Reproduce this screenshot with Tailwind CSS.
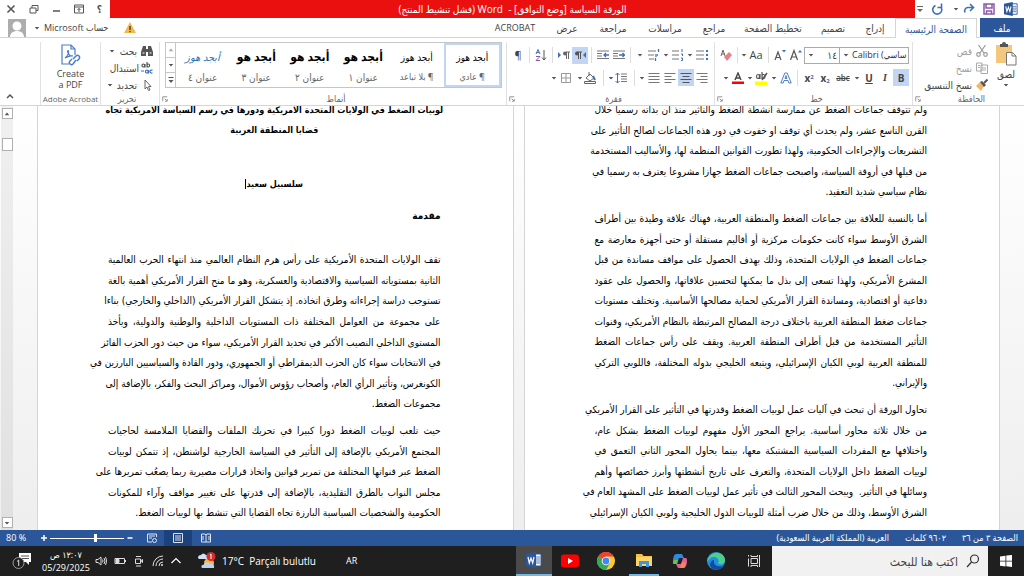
<!DOCTYPE html>
<html lang="ar" dir="rtl">
<head>
  <meta charset="UTF-8" />
  <title>الورقة السياسة [وضع التوافق] - Word</title>
  <script src="https://cdn.jsdelivr.net/npm/@tailwindcss/browser@4"></script>
</head>
<body class="h-screen flex flex-col overflow-hidden bg-white text-[#444] text-[10px] leading-3 font-['Open_Sans','DejaVu_Sans_Condensed','DejaVu_Sans',sans-serif]">

  <!-- Shared icons -->
  <svg class="hidden">
    <symbol id="caret" viewBox="0 0 8 8"><path d="M1 2.500h6L4 6z" fill="#555" /></symbol>
    <symbol id="launcher" viewBox="0 0 8 8"><path d="M1 7V1h6M3.500 3.500l3 3M7 4v3H4" fill="none" stroke="#777" /></symbol>
    <symbol id="word" viewBox="0 0 16 16">
      <path d="M8 2h7v12H8z" fill="#fff" stroke="#2b579a" />
      <path d="M9 5h5M9 7h5M9 9h5M9 11h5" stroke="#2b579a" stroke-width=".8" />
      <path d="M0 2l10-2v16L0 14z" fill="#2b579a" />
      <path d="M2 5l1.300 6L5 6l1.700 5L8 5" fill="none" stroke="#fff" stroke-width="1.200" />
    </symbol>
  </svg>

  <!-- Title bar -->
  <header class="flex h-[18px] shrink-0">
    <div class="w-[109px] flex items-center justify-between ps-1.5 pe-0.5">
      <svg class="size-3.5" viewBox="0 0 16 16"><use href="#word" /></svg>
      <button aria-label="حفظ"><svg class="size-3" viewBox="0 0 12 12" fill="none" stroke="#8a5aa8" stroke-width="1.500"><path d="M1 1h10v10H1zM3 1v4h6V1M3.500 11V8h5v3" /></svg></button>
      <button aria-label="إعادة" class="flex items-center" dir="ltr">
        <svg class="size-1.5 me-1" viewBox="0 0 8 8"><use href="#caret" /></svg>
        <svg class="size-3" viewBox="0 0 12 12" fill="none" stroke="#3f6fb5" stroke-width="1.600"><path d="M10 4.500H5a3.500 3.500 0 0 0-3 5M7 1l3.500 3.500L7 8" /></svg>
      </button>
      <button aria-label="تراجع"><svg class="size-3" viewBox="0 0 12 12" fill="none" stroke="#3f6fb5" stroke-width="1.600"><path d="M3.500 2.500a4.500 4.500 0 1 0 5 1M9.500.500v4H5.500" /></svg></button>
      <button aria-label="تخصيص"><svg class="w-1.5 h-2" viewBox="0 0 6 8"><path d="M0 1.500h6" stroke="#666" /><path d="M0 4h6L3 7z" fill="#666" /></svg></button>
    </div>
    <h1 class="flex-1 bg-[#ea1010] text-white flex items-center justify-center">الورقة السياسة [وضع التوافق] -&nbsp; Word (فشل تنشيط المنتج)</h1>
    <div dir="ltr" class="w-[110px] flex items-center justify-between ps-1.5 pe-2 text-[#555]">
      <button aria-label="إغلاق"><svg class="size-2.5" viewBox="0 0 10 10" stroke="#555" stroke-width="1.600"><path d="M1.500 1.500l7 7M8.500 1.500l-7 7" /></svg></button>
      <button aria-label="استعادة"><svg class="size-2.5" viewBox="0 0 10 10" fill="none" stroke="#555"><path d="M1 4h6v5H1zM3 4V1.500h6V6.500H7" /></svg></button>
      <button aria-label="تصغير"><svg class="size-2.5" viewBox="0 0 10 10" stroke="#555" stroke-width="1.500"><path d="M2 7h7" /></svg></button>
      <button aria-label="خيارات الشريط"><svg class="size-2.5" viewBox="0 0 10 10" fill="none" stroke="#555"><path d="M.5 1h9v8h-9zM.5 3h9M5 8V4.500M3.500 6L5 4.500 6.500 6" /></svg></button>
      <button class="font-bold">؟</button>
    </div>
  </header>

  <!-- Tabs -->
  <nav class="flex h-5 shrink-0 border-b border-[#d5d5d5]">
    <button class="w-11 bg-[#2b579a] text-white">ملف</button>
    <button class="w-[82px] ms-[3px] h-5 border border-b-0 border-[#d5d5d5] bg-white text-[#2b579a]">الصفحة الرئيسية</button>
    <button class="w-10">إدراج</button>
    <button class="w-11">تصميم</button>
    <button class="w-19">تخطيط الصفحة</button>
    <button class="w-[42px]">مراجع</button>
    <button class="w-14">مراسلات</button>
    <button class="w-12">مراجعة</button>
    <button class="w-11">عرض</button>
    <button class="w-15 text-[9px]">ACROBAT</button>
    <div class="ms-auto pe-2 flex items-center gap-1">
      <svg class="size-3" viewBox="0 0 12 12"><path d="M6 0l6 11H0z" fill="#f3b94d" /><path d="M6 4v4M6 9v1.300" stroke="#333" stroke-width="1.300" /></svg>
      <button class="flex items-center text-[9px]"><span class="ps-3 pe-1">حساب Microsoft</span><svg class="size-1.5 me-1" viewBox="0 0 8 8"><use href="#caret" /></svg></button>
      <svg class="size-[18px]" viewBox="0 0 18 18"><path d="M0 0h18v18H0z" fill="#adadad" /><circle cx="9" cy="7" r="4.500" fill="#fff" /><path d="M2 18c0-8 14-8 14 0z" fill="#fff" /></svg>
    </div>
  </nav>

  <!-- Ribbon -->
  <section class="flex h-[68px] shrink-0 border-b border-[#d5d5d5] pt-1">
    <!-- Clipboard -->
    <div class="w-28 border-e border-[#e1e1e1] flex flex-col">
      <div class="flex flex-1 ps-1.5">
        <button class="w-6 me-1.5 flex flex-col items-center">
          <svg class="w-[22px] h-6 shrink-0" viewBox="0 0 22 24"><path d="M1 3h16v18H1z" fill="#f3c77c" /><path d="M5 5V2h2a2 2 0 0 1 4 0h2v3z" fill="#555" /><path d="M11.500 10.500h6l3.500 3.500v9h-9.500z" fill="#fff" stroke="#777" /><path d="M17 10.500V14h4" fill="none" stroke="#777" /></svg>
          <span class="mt-0.5">لصق</span>
          <svg class="size-1.5 shrink-0 mt-0.5" viewBox="0 0 8 8"><use href="#caret" /></svg>
        </button>
        <div class="flex flex-col">
          <button class="flex items-center gap-1 h-[17px] text-[#a0a0a0]"><svg class="size-3" viewBox="0 0 12 12" fill="none" stroke="#999" stroke-width="1.200"><path d="M2.500 0L8 8M9.500 0L4 8" /><circle cx="2.500" cy="9.500" r="1.800" /><circle cx="9.500" cy="9.500" r="1.800" /></svg>قص</button>
          <button class="flex items-center gap-1 h-[17px] text-[#a0a0a0]"><svg class="size-3" viewBox="0 0 12 12" fill="#fff" stroke="#aaa"><path d="M.5 1h5.500v8H.5zM5 3h6.500v8.500H5zM6.500 6H10M6.500 8H10M2 3.500h2M2 5.500h2" /></svg>نسخ</button>
          <button class="flex items-center gap-1 h-[17px]"><svg class="size-3" viewBox="0 0 12 12"><path d="M0 7l4-4 4 4-3 5z" fill="#f0b763" /><path d="M4 3l2-1 4 4-2 2z" fill="#555" /><path d="M8 4l3.500-3.500" stroke="#555" stroke-width="2" /></svg>نسخ التنسيق</button>
        </div>
      </div>
      <div class="flex items-center h-3 px-0.5"><span class="flex-1 text-center text-[9px] text-[#666]">الحافظة</span><svg class="size-1.5" viewBox="0 0 8 8"><use href="#launcher" /></svg></div>
    </div>

    <!-- Font -->
    <div class="w-[198px] border-e border-[#e1e1e1] flex flex-col">
      <div class="flex-1 flex flex-col gap-[5px] ps-[3px] pt-1">
        <div dir="ltr" class="flex items-center justify-end h-[18px]">
          <button aria-label="مسح التنسيق" class="w-4"><svg class="size-3 mx-auto" viewBox="0 0 12 12"><path d="M1 7l2-6 2 6M2 5h2.500" fill="none" stroke="#666" /><path d="M4 8l5-5 3 3-5 6z" fill="#e88088" /></svg></button>
          <i class="w-px h-4 mx-[3px] bg-[#ddd]"></i>
          <button class="flex items-center text-[11px]"><svg class="size-1.5" viewBox="0 0 8 8"><use href="#caret" /></svg><span class="w-[18px] text-center">Aa</span></button>
          <i class="w-px h-4 mx-[3px] bg-[#ddd]"></i>
          <button aria-label="تصغير الخط" class="w-4"><svg class="size-3 mx-auto" viewBox="0 0 12 12"><path d="M1 11l3-8 3 8M2 8.500h4" fill="none" stroke="#555" stroke-width="1.200" /><path d="M8 1h4l-2 2.500z" fill="#3f6fb5" /></svg></button>
          <button aria-label="تكبير الخط" class="w-4"><svg class="size-3 mx-auto" viewBox="0 0 12 12"><path d="M.5 11L4 1.500 7.500 11M2 8h4" fill="none" stroke="#555" stroke-width="1.200" /><path d="M8 3.500h4L10 1z" fill="#3f6fb5" /></svg></button>
          <div class="w-9 h-[17px] border border-[#ababab] flex items-center">
            <svg class="size-1.5 shrink-0 mx-[3px]" viewBox="0 0 8 8"><use href="#caret" /></svg>
            <input type="text" aria-label="حجم الخط" value="١٤" class="w-full min-w-0 text-right pr-0.5" />
          </div>
          <div class="w-[69px] h-[17px] border border-s-0 border-[#ababab] flex items-center">
            <svg class="size-1.5 shrink-0 mx-[3px]" viewBox="0 0 8 8"><use href="#caret" /></svg>
            <input type="text" aria-label="الخط" value="Calibri (ساسي" class="w-full min-w-0 text-[9px] text-[#333]" />
          </div>
        </div>
        <div dir="ltr" class="flex items-center justify-end h-[17px]">
          <svg class="w-2 h-1.5" viewBox="0 0 8 8"><use href="#caret" /></svg>
          <button aria-label="لون الخط" class="w-4"><svg class="size-3 mx-auto" viewBox="0 0 12 12"><path d="M3 8l3-7 3 7M4 6h4" fill="none" stroke="#444" stroke-width="1.400" /><path d="M0 9.500h12V12H0z" fill="#f00" /></svg></button>
          <svg class="w-2 h-1.5" viewBox="0 0 8 8"><use href="#caret" /></svg>
          <button aria-label="تمييز" class="w-4"><svg class="size-3.5 mx-auto" viewBox="0 0 14 14"><path d="M1.500 5.500a1.500 2 0 1 0 3 0 1.500 2 0 1 0-3 0M5 3v5M7 1v7M7 5.500a1.500 2 0 1 0 3 0 1.500 2 0 1 0-3 0" fill="none" stroke="#555" stroke-width="1.200" /><path d="M7 9l5-7" stroke="#555" stroke-width="1.500" /><path d="M0 10.500h12V14H0z" fill="#ff0" /></svg></button>
          <svg class="w-2 h-1.5" viewBox="0 0 8 8"><use href="#caret" /></svg>
          <button aria-label="تأثيرات النص" class="w-4"><svg class="size-3 mx-auto" viewBox="0 0 12 12" fill="none" stroke="#4f81c7"><path d="M.8 11L4.800 1h2.400l4 10H8.800l-.8-2.500H4L3.200 11zM5 6.500h2L6 3.500z" /></svg></button>
          <i class="w-px h-4 mx-[3px] bg-[#ddd]"></i>
          <button class="w-4 font-bold">x<sup class="text-[6px] text-[#3f6fb5]">2</sup></button>
          <button class="w-4 font-bold">x<sub class="text-[6px] text-[#3f6fb5]">2</sub></button>
          <button class="w-5 font-semibold text-[8px] line-through">abc</button>
          <svg class="w-2 h-1.5" viewBox="0 0 8 8"><use href="#caret" /></svg>
          <button class="w-4 font-bold underline">U</button>
          <button class="w-4 font-['Liberation_Serif',serif] font-bold italic">I</button>
          <button class="w-4 h-[17px] font-bold bg-[#c2d5f2]">B</button>
        </div>
      </div>
      <div class="flex items-center h-3 px-0.5"><span class="flex-1 text-center text-[9px] text-[#666]">خط</span><svg class="size-1.5" viewBox="0 0 8 8"><use href="#launcher" /></svg></div>
    </div>

    <!-- Paragraph -->
    <div class="w-[208px] border-e border-[#e1e1e1] flex flex-col">
      <div class="flex-1 flex flex-col gap-[5px] ps-1 pt-1">
        <div dir="ltr" class="flex items-center justify-end h-[18px]">
          <button class="w-4 text-[11px]">¶</button>
          <i class="w-px h-4 mx-[3px] bg-[#ddd]"></i>
          <button aria-label="فرز" class="w-4"><svg class="size-3 mx-auto" viewBox="0 0 12 12" fill="none"><path d="M1 5l2-4.500L5 5M2 3.500h2" stroke="#3f6fb5" /><path d="M1 7.500h4l-4 4h4" stroke="#8a5aa8" /><path d="M9 1v10M7 8.500L9 11l2-2.500" stroke="#555" /></svg></button>
          <i class="w-px h-4 mx-[3px] bg-[#ddd]"></i>
          <button aria-label="من اليسار إلى اليمين" class="w-4"><svg class="size-3 mx-auto" viewBox="0 0 12 12"><path d="M0 3l3 3-3 3z" fill="#3f6fb5" /><path d="M8 3h4M8.500 3v7M10.500 3v7" stroke="#666" /><circle cx="7" cy="4.500" r="2" fill="#666" /></svg></button>
          <button aria-label="من اليمين إلى اليسار" class="w-4 h-[17px] bg-[#c2d5f2]"><svg class="size-3 mx-auto" viewBox="0 0 12 12"><path d="M12 3L9 6l3 3z" fill="#3f6fb5" /><path d="M3 3h5M4.500 3v7M6.500 3v7" stroke="#555" /><circle cx="3" cy="4.500" r="2" fill="#555" /></svg></button>
          <i class="w-px h-4 mx-[3px] bg-[#ddd]"></i>
          <button aria-label="زيادة المسافة" class="w-4"><svg class="size-3 mx-auto" viewBox="0 0 12 12" fill="none" stroke="#777"><path d="M0 2h12M0 4.500h5M0 7h5M0 9.500h12" /><path d="M12 6H7M9 4L7 6l2 2" stroke="#3f6fb5" stroke-width="1.300" /></svg></button>
          <button aria-label="إنقاص المسافة" class="w-4"><svg class="size-3 mx-auto" viewBox="0 0 12 12" fill="none" stroke="#777"><path d="M0 2h12M0 4.500h5M0 7h5M0 9.500h12" /><path d="M6 6h5.500M9.500 4l2 2-2 2" stroke="#3f6fb5" stroke-width="1.300" /></svg></button>
          <i class="w-px h-4 mx-[3px] bg-[#ddd]"></i>
          <svg class="w-3 h-1.5" viewBox="0 0 8 8"><use href="#caret" /></svg>
          <button aria-label="قائمة متعددة" class="w-4"><svg class="size-3 mx-auto" viewBox="0 0 12 12" fill="none" stroke="#777"><path d="M0 2h8M0 6h6M1 10h5" /><path d="M10.500 0v3M8 5v3M9 6h1M7.500 9v3" stroke="#3f6fb5" stroke-width="1.300" /></svg></button>
          <svg class="w-2 h-1.5" viewBox="0 0 8 8"><use href="#caret" /></svg>
          <button aria-label="ترقيم" class="w-4"><svg class="size-3 mx-auto" viewBox="0 0 12 12" fill="none" stroke="#777"><path d="M0 2h7M0 6h7M0 10h7" /><path d="M10 0v3M9 5h1.500v2M9 9h1.500v2.500H9" stroke="#3f6fb5" /></svg></button>
          <svg class="w-2 h-1.5" viewBox="0 0 8 8"><use href="#caret" /></svg>
          <button aria-label="تعداد نقطي" class="w-4"><svg class="size-3 mx-auto" viewBox="0 0 12 12" fill="none" stroke="#777"><path d="M0 2h8M0 6h8M0 10h8" /><path d="M10 2h2M10 6h2M10 10h2" stroke="#3f6fb5" stroke-width="2" /></svg></button>
        </div>
        <div dir="ltr" class="flex items-center justify-end h-[17px]">
          <svg class="w-3 h-1.5" viewBox="0 0 8 8"><use href="#caret" /></svg>
          <button aria-label="حدود" class="w-4"><svg class="size-3" viewBox="0 0 12 12" fill="none" stroke="#999"><path d="M1.500 1.500h9v9h-9zM6 1.500v9M1.500 6h9" /></svg></button>
          <svg class="w-2 h-1.5" viewBox="0 0 8 8"><use href="#caret" /></svg>
          <button aria-label="تظليل" class="w-4"><svg class="size-3" viewBox="0 0 12 12" fill="none" stroke="#666"><path d="M2 6l4-4 4 4-4 3zM5 0v4" /><path d="M9 4l2 4" stroke="#3f6fb5" stroke-width="2" /><path d="M.5 9.500h11v2H.5z" /></svg></button>
          <i class="w-px h-4 mx-[3px] bg-[#ddd]"></i>
          <svg class="w-2 h-1.5" viewBox="0 0 8 8"><use href="#caret" /></svg>
          <button aria-label="تباعد الأسطر" class="w-4"><svg class="size-3" viewBox="0 0 12 12" fill="none" stroke="#777"><path d="M6 2h6M6 4.500h6M6 7h6M6 9.500h6" /><path d="M2.500 1v10M.5 3l2-2 2 2M.5 9l2 2 2-2" stroke="#3f6fb5" /></svg></button>
          <i class="w-px h-4 mx-[3px] bg-[#ddd]"></i>
          <svg class="w-2 h-1.5" viewBox="0 0 8 8"><use href="#caret" /></svg>
          <button aria-label="ضبط" class="w-4"><svg class="size-3 mx-auto" viewBox="0 0 12 12" stroke="#777"><path d="M.5 1.500h11M.5 4.500h11M.5 7.500h11M.5 10.500h11" /></svg></button>
          <button aria-label="محاذاة لليسار" class="w-4"><svg class="size-3 mx-auto" viewBox="0 0 12 12" stroke="#777"><path d="M.5 1.500h11M.5 4.500h7M.5 7.500h11M.5 10.500h7" /></svg></button>
          <button aria-label="توسيط" class="w-4 h-[17px] bg-[#c2d5f2]"><svg class="size-3 mx-auto" viewBox="0 0 12 12" stroke="#555"><path d="M.5 1.500h11M2.500 4.500h7M.5 7.500h11M2.500 10.500h7" /></svg></button>
          <button aria-label="محاذاة لليمين" class="w-4"><svg class="size-3 mx-auto" viewBox="0 0 12 12" stroke="#777"><path d="M.5 1.500h11M4.500 4.500h7M.5 7.500h11M4.500 10.500h7" /></svg></button>
        </div>
      </div>
      <div class="flex items-center h-3 px-0.5"><span class="flex-1 text-center text-[9px] text-[#666]">فقرة</span><svg class="size-1.5" viewBox="0 0 8 8"><use href="#launcher" /></svg></div>
    </div>

    <!-- Styles -->
    <div class="flex-1 min-w-0 border-e border-[#e1e1e1] flex flex-col">
      <div class="h-[46px] ms-1 me-[5px] border border-[#c6c6c6] flex text-black">
        <button class="flex-1 border-2 border-[#c2d5f2] flex flex-col items-center pt-1.5 whitespace-nowrap overflow-hidden">أبجد هوز<span class="mt-auto mb-0.5 text-[9px] text-[#666]">¶ عادي</span></button>
        <button class="flex-1 flex flex-col items-center pt-2 whitespace-nowrap overflow-hidden">أبجد هوز<span class="mt-auto mb-1 text-[9px] text-[#666]">¶ بلا تباعد</span></button>
        <button class="flex-1 flex flex-col items-center pt-2 text-[12px] font-bold whitespace-nowrap overflow-hidden">أبجد هو<span class="mt-auto mb-1 text-[10px] font-normal text-[#666]">عنوان ١</span></button>
        <button class="flex-1 flex flex-col items-center pt-2 text-[12px] font-bold whitespace-nowrap overflow-hidden">أبجد هو<span class="mt-auto mb-1 text-[10px] font-normal text-[#666]">عنوان ٢</span></button>
        <button class="flex-1 flex flex-col items-center pt-2 text-[12px] font-bold whitespace-nowrap overflow-hidden">أبجد هو<span class="mt-auto mb-1 text-[10px] font-normal text-[#666]">عنوان ٣</span></button>
        <button class="flex-1 flex flex-col items-center pt-2 italic text-[#2e74b5] whitespace-nowrap overflow-hidden">أبجد هوز<span class="mt-auto mb-1 text-[10px] not-italic text-[#666]">عنوان ٤</span></button>
        <div class="w-2.5 border-s border-[#c6c6c6] flex flex-col divide-y divide-[#c6c6c6]">
          <button aria-label="أعلى" class="flex-1"><svg class="size-1.5 mx-auto rotate-180 opacity-50" viewBox="0 0 8 8"><use href="#caret" /></svg></button>
          <button aria-label="أسفل" class="flex-1"><svg class="size-1.5 mx-auto" viewBox="0 0 8 8"><use href="#caret" /></svg></button>
          <button aria-label="المزيد" class="flex-1"><svg class="size-2 mx-auto" viewBox="0 0 8 8"><path d="M1.500 1.500h5" stroke="#555" /><path d="M1.500 4h5L4 7z" fill="#555" /></svg></button>
        </div>
      </div>
      <div class="flex items-center h-3 mt-auto px-0.5"><span class="flex-1 text-center text-[9px] text-[#666]">أنماط</span><svg class="size-1.5" viewBox="0 0 8 8"><use href="#launcher" /></svg></div>
    </div>

    <!-- Editing -->
    <div class="w-[59px] border-e border-[#e1e1e1] flex flex-col ps-1.5">
      <button class="flex items-center gap-1 h-[17px]"><svg class="size-3 shrink-0" viewBox="0 0 12 12" fill="#555"><path d="M2 1h3v3h2V1h3l2 6v4H7V7H5v4H0V7z" /><path d="M1.500 8h2M8.500 8h2" stroke="#fff" /></svg>بحث<svg class="size-1.5 ms-auto me-2" viewBox="0 0 8 8"><use href="#caret" /></svg></button>
      <button class="flex items-center gap-0.5 h-[17px] whitespace-nowrap"><svg class="size-3 shrink-0" viewBox="0 0 12 12" fill="none" stroke-width="1.200"><path d="M1 3.500a1.300 1.500 0 1 0 2.600 0 1.300 1.500 0 1 0-2.600 0M4 2v3.500M6 0v5.500M6 3.500a1.300 1.500 0 1 0 2.600 0 1.300 1.500 0 1 0-2.600 0" stroke="#555" /><path d="M4.500 9.500a1.300 1.500 0 1 0 2.600 0 1.300 1.500 0 1 0-2.600 0M7.500 8v3.500M11.500 8.200q-2.500-.5-2.500 1.300t2.500 1.500M0 9h3" stroke="#3f6fb5" /></svg>استبدال</button>
      <button class="flex items-center gap-1 h-[17px]"><svg class="size-3 shrink-0" viewBox="0 0 12 12" fill="#fff" stroke="#666"><path d="M4 1v9l2-2 1.500 3.500L9 11 7.500 7.500H10z" /></svg>تحديد<svg class="size-1.5 shrink-0 ms-auto me-1.5" viewBox="0 0 8 8"><use href="#caret" /></svg></button>
      <span class="mt-auto text-center text-[9px] text-[#666]">تحرير</span>
    </div>

    <!-- Acrobat -->
    <div class="w-15 border-e border-[#e1e1e1] flex flex-col items-center">
      <button class="flex flex-col items-center text-[9px] leading-[11px] pt-0.5">
        <svg class="w-5 h-[22px]" viewBox="0 0 20 22" fill="none" stroke="#4a80c9" stroke-width="1.200"><path d="M8 20H1V1h9l4 4v6M10 1v4h4" /><path d="M4 14c3-2 4-6 3.500-7S6 7 7 9s2 3 4 3-2-1-7 2" /><path d="M12 15l3-3a2 2 0 0 1 3 3l-2 2M15 16l-3 4a2 2 0 0 1-3-3l2-2" stroke-width="1.500" /></svg>
        <span class="mt-0.5">Create</span><span>a PDF</span>
      </button>
      <span class="mt-auto text-[8px] text-[#666] whitespace-nowrap">Adobe Acrobat</span>
    </div>
    <div class="w-10 flex items-end justify-end p-1.5">
      <button aria-label="طي الشريط"><svg class="w-2 h-1.5" viewBox="0 0 8 6"><path d="M1 5l3-3 3 3" fill="none" stroke="#555" stroke-width="1.500" /></svg></button>
    </div>
  </section>

  <!-- Document -->
  <main class="flex-1 min-h-0 flex overflow-hidden bg-linear-to-b from-white to-[#eee] text-black text-[10px] leading-[20px] font-['DejaVu_Sans_Condensed','DejaVu_Sans',sans-serif]">
    <article class="flex-1 min-w-0 ms-6 bg-white border-x border-[#d5d5d5] ps-[72px] pe-[70px] overflow-hidden">
      <p class="-mt-[6px] h-[103px] grid grid-cols-[100%] auto-rows-fr whitespace-nowrap [text-align-last:justify]">
        <span>ولم تتوقف جماعات الضغط عن ممارسة انشطة الضغط والتأثير منذ ان بدأته رسميا خلال</span>
        <span>القرن التاسع عشر، ولم يحدث أي توقف او خفوت في دور هذه الجماعات لصالح التأثير على</span>
        <span>التشريعات والإجراءات الحكومية، ولهذا تطورت القوانين المنظمة لها، والأساليب المستخدمة</span>
        <span>من قبلها في أروقة السياسة، واصبحت جماعات الضغط جهازا مشروعا يعترف به رسميا في</span>
        <span class="[text-align-last:start]">نظام سياسي شديد التعقيد.</span>
      </p>
      <p class="mt-1.5 h-[185px] grid grid-cols-[100%] auto-rows-fr whitespace-nowrap [text-align-last:justify]">
        <span>أما بالنسبة للعلاقة بين جماعات الضغط والمنطقة العربية، فهناك علاقة وطيدة بين أطراف</span>
        <span>الشرق الأوسط سواء كانت حكومات مركزية أو أقاليم مستقلة أو حتى أجهزة معارضة مع</span>
        <span>جماعات الضغط في الولايات المتحدة، وذلك بهدف الحصول على مواقف مساندة من قبل</span>
        <span>المشرع الأمريكي، ولهذا تسعى إلى بذل ما يمكنها لتحسين علاقاتها، والحصول على عقود</span>
        <span>دفاعية أو اقتصادية، ومساندة القرار الأمريكي لحماية مصالحها الأساسية. وتختلف مستويات</span>
        <span>جماعات ضغط المنطقة العربية باختلاف درجة المصالح المرتبطة بالنظام الأمريكي، وقنوات</span>
        <span>التأثير المستخدمة من قبل أطراف المنطقة العربية. ويقف على رأس جماعات الضغط</span>
        <span>للمنطقة العربية لوبي الكيان الإسرائيلي، ويتبعه الخليجي بدوله المختلفة، فاللوبي التركي</span>
        <span class="[text-align-last:start]">والإيراني.</span>
      </p>
      <p class="mt-1.5 h-[123px] grid grid-cols-[100%] auto-rows-fr whitespace-nowrap [text-align-last:justify]">
        <span>تحاول الورقة أن تبحث في آليات عمل لوبيات الضغط وقدرتها في التأثير على القرار الأمريكي</span>
        <span>من خلال ثلاثة محاور أساسية. يراجع المحور الأول مفهوم لوبيات الضغط بشكل عام،</span>
        <span>واختلافها مع المفردات السياسية المشتبكة معها، بينما يحاول المحور الثاني التعمق في</span>
        <span>لوبيات الضغط داخل الولايات المتحدة، والتعرف على تاريخ أنشطتها وأبرز خصائصها وأهم</span>
        <span>وسائلها في التأثير.&nbsp; ويبحث المحور الثالث في تأثير عمل لوبيات الضغط على المشهد العام في</span>
        <span>الشرق الأوسط، وذلك من خلال ضرب أمثلة للوبيات الدول الخليجية ولوبي الكيان الإسرائيلي</span>
      </p>
    </article>
    <article class="flex-1 min-w-0 ms-2.5 bg-white border-x border-[#d5d5d5] ps-[72px] pe-[70px] overflow-hidden">
      <h2 class="-mt-1.5 text-center text-[9px] font-bold whitespace-nowrap flex flex-col items-center">
        <span>لوبيات الضغط في الولايات المتحدة الامريكية ودورها في رسم السياسة الامريكية تجاه</span>
        <span>قضايا المنطقة العربية</span>
      </h2>
      <p class="mt-[34px] text-center text-[9px] font-bold"><span class="border-e border-black">سلسبيل سعيد</span></p>
      <h3 class="mt-3 font-bold">مقدمة</h3>
      <p class="mt-6 h-[165px] grid grid-cols-[100%] auto-rows-fr whitespace-nowrap [text-align-last:justify]">
        <span>تقف الولايات المتحدة الأمريكية على رأس هرم النظام العالمي منذ انتهاء الحرب العالمية</span>
        <span>الثانية بمستوياته السياسية والاقتصادية والعسكرية، وهو ما منح القرار الأمريكي أهمية بالغة</span>
        <span>تستوجب دراسة إجراءاته وطرق اتخاذه. إذ يتشكل القرار الأمريكي (الداخلي والخارجي) بناءا</span>
        <span>على مجموعة من العوامل المختلفة ذات المستويات الداخلية والوطنية والدولية، ويأخذ</span>
        <span>المستوى الداخلي النصيب الأكبر في تحديد القرار الأمريكي، سواء من حيث دور الحزب الفائز</span>
        <span>في الانتخابات سواء كان الحزب الديمقراطي أو الجمهوري، ودور القادة والسياسيين البارزين في</span>
        <span>الكونغرس، وتأثير الرأي العام، وأصحاب رؤوس الأموال، ومراكز البحث والفكر، بالإضافة إلى</span>
        <span class="[text-align-last:start]">مجموعات الضغط.</span>
      </p>
      <p class="mt-1.5 h-[103px] grid grid-cols-[100%] auto-rows-fr whitespace-nowrap [text-align-last:justify]">
        <span>حيث تلعب لوبيات الضغط دورا كبيرا في تحريك الملفات والقضايا الملامسة لحاجيات</span>
        <span>المجتمع الأمريكي بالإضافة إلى التأثير في السياسة الخارجية لواشنطن، إذ تتمكن لوبيات</span>
        <span>الضغط عبر قنواتها المختلفة من تمرير قوانين واتخاذ قرارات مصيرية ربما يصعُب تمريرها على</span>
        <span>مجلس النواب بالطرق التقليدية، بالإضافة إلى قدرتها على تغيير مواقف وآراء للمكونات</span>
        <span class="[text-align-last:start]">الحكومية والشخصيات السياسية البارزة تجاه القضايا التي تنشط بها لوبيات الضغط.</span>
      </p>
    </article>
    <div class="w-6"></div>
    <!-- Scrollbar -->
    <div class="w-3 me-px flex flex-col items-center bg-linear-to-b from-[#f0f0f0] to-[#e0e0e0] py-0.5">
      <button aria-label="تمرير لأعلى" class="size-[11px] border border-[#b0b0b0] bg-white"><svg class="size-1.5 mx-auto rotate-180" viewBox="0 0 8 8"><use href="#caret" /></svg></button>
      <div class="mt-[19px] w-[11px] h-[13px] border border-[#b0b0b0] bg-white"></div>
      <button aria-label="تمرير لأسفل" class="mt-auto size-[11px] border border-[#b0b0b0] bg-white"><svg class="size-1.5 mx-auto" viewBox="0 0 8 8"><use href="#caret" /></svg></button>
    </div>
  </main>

  <!-- Status bar -->
  <footer class="h-4 shrink-0 bg-[#2b579a] text-white text-[9px] flex items-center ps-1.5">
    <span>الصفحة ٣ من ٣٦</span>
    <span class="ms-4">٩٦٠٢ كلمات</span>
    <span class="ms-4">العربية (المملكة العربية السعودية)</span>
    <div dir="ltr" class="flex-1 flex items-center self-stretch ps-1.5">
      <span class="w-[34px]">80 %</span>
      <svg class="size-2" viewBox="0 0 8 8" stroke="#fff" stroke-width="1.500"><path d="M4 1v6M1 4h6" /></svg>
      <input type="range" dir="rtl" aria-label="التكبير" min="10" max="200" value="83" class="appearance-none mx-0.5 w-[74px] h-px bg-white [&::-webkit-slider-thumb]:appearance-none [&::-webkit-slider-thumb]:w-[3px] [&::-webkit-slider-thumb]:h-2 [&::-webkit-slider-thumb]:bg-white" />
      <svg class="size-2 me-1.5" viewBox="0 0 8 8" stroke="#fff" stroke-width="1.500"><path d="M1.500 4h5" /></svg>
      <button aria-label="تخطيط ويب" class="w-6"><svg class="size-2.5 mx-auto" viewBox="0 0 10 10" fill="none" stroke="#dbe5f3"><path d="M5 9H.5V1h9v3M2 3h6M2 5h3" /><circle cx="7.500" cy="7.500" r="2" /></svg></button>
      <button aria-label="تخطيط الطباعة" class="w-7 self-stretch bg-[#1c427d]"><svg class="size-2.5 mx-auto" viewBox="0 0 10 10" fill="none" stroke="#dbe5f3"><path d="M.5.500h9v9h-9zM2 3h6M2 5h6M2 7h6" /></svg></button>
      <button aria-label="وضع القراءة" class="w-7"><svg class="size-2.5 mx-auto" viewBox="0 0 10 10" fill="none" stroke="#dbe5f3"><path d="M.5 1h3.500l1 1 1-1h3.500v8H.5zM5 2v7M2 3v4M8 3v4" /></svg></button>
    </div>
  </footer>

  <!-- Taskbar -->
  <div class="h-[30px] shrink-0 bg-[#1f1f1f] text-white flex items-stretch">
    <button aria-label="ابدأ" class="w-9 shrink-0"><svg class="size-3 mx-auto" viewBox="0 0 12 12" fill="#fff"><path d="M0 1.500l5.500-.8v5H0zM6.300.600L12 0v5.700H6.300zM0 6.400h5.500v5L0 10.700zM6.300 6.400H12V12l-5.700-.7z" /></svg></button>
    <label class="w-[216px] shrink-0 bg-[#f1f1f1] flex items-center gap-2 ps-2">
      <svg class="size-3.5 shrink-0" viewBox="0 0 14 14" fill="none" stroke="#333" stroke-width="1.200"><circle cx="8.500" cy="5" r="4" /><path d="M5.500 8L1 13" /></svg>
      <input type="text" aria-label="بحث" placeholder="اكتب هنا للبحث" class="w-full min-w-0 text-[12px] placeholder:text-[#444]" />
    </label>
    <button aria-label="عرض المهام" class="w-9 shrink-0"><svg class="size-3.5 mx-auto" viewBox="0 0 14 14" fill="none" stroke="#ddd"><path d="M4 4.500h6.500v5H4zM4 1v1.500h6.500V1M4 13v-1.500h6.500V13M1.500 1v1.500M1.500 4.500v8M12.500 1v12" /></svg></button>
    <button aria-label="Edge" class="w-10 shrink-0"><svg class="size-[18px] mx-auto" viewBox="0 0 18 18"><circle cx="9" cy="9" r="9" fill="#1f8fe0" /><path d="M2 5C6-2 18 0 18 8c0 5-6 5-7 3 2-3-1-6-4-6S3 6 0 10c0-2 1-4 2-5z" fill="#4ccf8d" /><path d="M7 8c-1 5 3 7 9 6-4 6-12 4-13-1 0-3 2-5 4-5z" fill="#124d9c" /></svg></button>
    <button aria-label="Copilot" class="w-8 shrink-0"><svg class="size-4 mx-auto" viewBox="0 0 16 16"><path d="M4 1h6l2 4H7L5 11H2C0 11 1 1 4 1z" fill="#2a8be0" /><path d="M2 7h4l-1 4H2c-2 0-1-3 0-4z" fill="#6cc04a" /><path d="M12 15H6L4 11h5l2-6h3c2 0 1 10-2 10z" fill="#e0609c" /><path d="M8 15l2-6 4 1-2 5z" fill="#f08a4a" /></svg></button>
    <button aria-label="مستكشف الملفات" class="w-10 shrink-0 px-[5px] flex flex-col items-center"><svg class="size-4 mt-1.5" viewBox="0 0 16 16"><path d="M0 2h6l1.500 2H16v10H0z" fill="#f5c044" /><path d="M0 5h16v9H0z" fill="#fbd66a" /><path d="M3 9h10v6h-3v-3H6v3H3z" fill="#3a97e0" /></svg><i class="mt-auto w-full h-0.5 bg-[#6cb8e8]"></i></button>
    <button aria-label="Chrome" class="w-9 shrink-0"><svg class="size-[18px] mx-auto" viewBox="0 0 18 18"><circle cx="9" cy="9" r="9" fill="#fcc934" /><path d="M9 9L1.200 4.500A9 9 0 0 1 16.800 4.500H9z" fill="#ea4335" /><path d="M1.200 4.500A9 9 0 0 0 9 18l4-7-4-2z" fill="#34a853" /><circle cx="9" cy="9" r="4.300" fill="#fff" /><circle cx="9" cy="9" r="3.400" fill="#4285f4" /></svg></button>
    <button aria-label="YouTube" class="w-9 shrink-0"><svg class="w-[18px] h-3.5 mx-auto" viewBox="0 0 18 14"><rect width="18" height="13" y=".5" rx="3" fill="#f00" /><path d="M7 4l5 3-5 3z" fill="#fff" /></svg></button>
    <button aria-label="Word" class="w-9 shrink-0 bg-[#4a4a4a] flex flex-col items-center"><svg class="size-4 mt-1.5" viewBox="0 0 16 16"><use href="#word" /></svg><i class="mt-auto w-full h-0.5 bg-[#6cb8e8]"></i></button>
    <div dir="ltr" class="flex-1 min-w-0 ps-3 flex items-center">
      <button aria-label="الإشعارات" class="w-[29px] shrink-0"><svg class="w-5 h-[18px]" viewBox="0 0 20 18"><path d="M7 1h12v9h-2v3l-3-3H7z" fill="#fff" /><path d="M9 4h8M9 6.500h8" stroke="#555" /><circle cx="6.500" cy="11" r="5.500" fill="#1f1f1f" stroke="#999" /><path d="M5 9.500L6.700 8v6" fill="none" stroke="#ddd" /></svg></button>
      <div class="w-[50px] text-center text-[9px] leading-[13px]"><div dir="rtl">١٢:٠٧ ص</div><div>05/29/2025</div></div>
      <div class="flex items-center gap-[7px] ms-1">
        <svg class="size-3" viewBox="0 0 12 12" fill="none" stroke="#ddd"><path d="M1 4.500h2L6 2v8L3 7.500H1zM7.500 4.500q1 1.500 0 3M9 3q2 3 0 6M10.500 2q2.500 4 0 8" /></svg>
        <svg class="size-3" viewBox="0 0 12 12" fill="none" stroke="#ddd"><path d="M1 3.500h9.500v5H1zM11.500 5v2" /><path d="M2 4.500h3v3H2z" fill="#ddd" /></svg>
        <svg class="size-3" viewBox="0 0 12 12" fill="none" stroke="#ddd"><path d="M2.500 4h5v4.500h-5zM7.500 6l2-1.500v3zM3 1.500h5M3 11h5" /></svg>
        <svg class="size-3" viewBox="0 0 12 12" fill="none" stroke="#ddd"><path d="M1 11A10 10 0 0 1 11 1M4 11a7 7 0 0 1 7-7M7 11a4 4 0 0 1 4-4" /><circle cx="10" cy="10" r=".7" /></svg>
        <svg class="size-2.5" viewBox="0 0 10 10" fill="none" stroke="#fff" stroke-width="1.200"><path d="M.5 7L5 2.500 9.500 7" /></svg>
      </div>
      <button class="flex items-center ms-4 whitespace-nowrap">
        <svg class="w-[19px] h-[18px] me-1.5" viewBox="0 0 19 18"><circle cx="12" cy="11" r="5" fill="#f6b93b" /><path d="M1 6q0-3 3-3 2-3 5 0 3 0 2 4H2z" fill="#cfe0f7" /><path d="M5 16q-2-3 2-3.500 2-4 6-1 5 0 4 4.500z" fill="#bcd3f2" /><circle cx="14" cy="4.500" r="4.500" fill="#d92b2b" /><path d="M13 3l1-1v5" fill="none" stroke="#fff" /></svg>
        17°C&nbsp; Parçalı bulutlu
      </button>
      <span class="ms-[30px] text-[9px]">AR</span>
    </div>
  </div>
</body>
</html>
